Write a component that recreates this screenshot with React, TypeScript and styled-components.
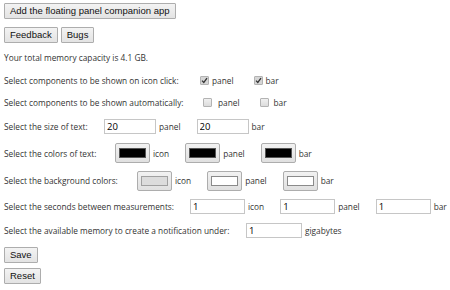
import React from 'react';
import styled, { createGlobalStyle } from 'styled-components';

const Global = createGlobalStyle`
  html, body { margin: 0; padding: 0; background: #ffffff; }
  body {
    font-family: "Open Sans", "Segoe UI", sans-serif;
    font-size: 8.3px;
    color: #333333;
  }
`;

const Page = styled.div`
  display: flex;
  flex-direction: column;
  align-items: flex-start;
  padding: 3px 4px 0;
  width: 450px;
  box-sizing: border-box;
`;

const Button = styled.button`
  height: 16px;
  padding: 0 5px;
  margin: 0;
  font-family: "Liberation Sans", Arial, sans-serif;
  font-size: 9.5px;
  line-height: 14px;
  color: #111111;
  background: linear-gradient(#f3f3f3, #e3e3e3);
  border: 1px solid #adadad;
  border-radius: 1px;
`;

const ButtonBar = styled.div<{ $mt: number }>`
  display: flex;
  gap: 3px;
  margin-top: ${(p) => p.$mt}px;
`;

const Settings = styled.div`
  display: flex;
  flex-direction: column;
  margin-top: 3px;
  margin-bottom: 5px;
`;

const Row = styled.div<{ $h: number }>`
  display: flex;
  align-items: center;
  height: ${(p) => p.$h}px;
  white-space: nowrap;
`;

const Label = styled.span<{ $w?: number }>`
  flex: none;
  width: ${(p) => (p.$w ? `${p.$w}px` : 'auto')};
`;

const Caption = styled.span<{ $ml?: number; $mr?: number }>`
  margin: 0 ${(p) => p.$mr ?? 16}px 0 ${(p) => p.$ml ?? 3}px;
`;

const Check = styled.span<{ $on?: boolean }>`
  flex: none;
  width: 9px;
  height: 9px;
  box-sizing: border-box;
  border: 1px solid #b3b3b3;
  border-radius: 1px;
  background: ${(p) => (p.$on ? '#d6d6d6' : 'linear-gradient(#f0f0f0, #dcdcdc)')};
  display: inline-flex;
  align-items: center;
  justify-content: center;
`;

const TextField = styled.input<{ $w: number }>`
  flex: none;
  width: ${(p) => p.$w}px;
  height: 15px;
  box-sizing: border-box;
  margin: 0;
  padding: 0 2px;
  border: 1px solid #c6c6c6;
  font-family: "Open Sans", "Segoe UI", sans-serif;
  font-size: 9.5px;
  color: #000000;
  background: #ffffff;
  outline: none;
`;

const ColorWell = styled.span`
  flex: none;
  display: inline-flex;
  align-items: center;
  justify-content: center;
  width: 35px;
  height: 20px;
  box-sizing: border-box;
  border: 1px solid #adadad;
  border-radius: 2px;
  background: linear-gradient(#f2f2f2, #e0e0e0);
`;

const Swatch = styled.span<{ $c: string; $b: string }>`
  width: 27px;
  height: 10px;
  box-sizing: border-box;
  background: ${(p) => p.$c};
  border: 1px solid ${(p) => p.$b};
`;

const Tick = () => (
  <svg width="7" height="7" viewBox="0 0 7 7">
    <path d="M1 3.6 L2.8 5.4 L6 1.2" fill="none" stroke="#333" strokeWidth="1.3" />
  </svg>
);

const Box = ({ on }: { on?: boolean }) => <Check $on={on}>{on ? <Tick /> : null}</Check>;

const Color = ({ c, b }: { c: string; b: string }) => (
  <ColorWell>
    <Swatch $c={c} $b={b} />
  </ColorWell>
);

export default function App() {
  return (
    <>
      <Global />
      <Page>
        <Button>Add the floating panel companion app</Button>
        <ButtonBar $mt={8}>
          <Button>Feedback</Button>
          <Button>Bugs</Button>
        </ButtonBar>
        <Settings>
          <Row $h={23}>
            <Label>Your total memory capacity is 4.1 GB.</Label>
          </Row>
          <Row $h={22}>
            <Label $w={196}>Select components to be shown on icon click:</Label>
            <Box on />
            <Caption $mr={20}>panel</Caption>
            <Box on />
            <Caption>bar</Caption>
          </Row>
          <Row $h={22}>
            <Label $w={199}>Select components to be shown automatically:</Label>
            <Box />
            <Caption $ml={6} $mr={20}>panel</Caption>
            <Box />
            <Caption $ml={5}>bar</Caption>
          </Row>
          <Row $h={26}>
            <Label $w={100}>Select the size of text:</Label>
            <TextField $w={52} value="20" readOnly />
            <Caption>panel</Caption>
            <TextField $w={52} value="20" readOnly />
            <Caption>bar</Caption>
          </Row>
          <Row $h={28}>
            <Label $w={111}>Select the colors of text:</Label>
            <Color c="#000000" b="#555555" />
            <Caption>icon</Caption>
            <Color c="#000000" b="#555555" />
            <Caption>panel</Caption>
            <Color c="#000000" b="#555555" />
            <Caption>bar</Caption>
          </Row>
          <Row $h={27}>
            <Label $w={133}>Select the background colors:</Label>
            <Color c="#dcdcdc" b="#a0a0a0" />
            <Caption>icon</Caption>
            <Color c="#ffffff" b="#8a8a8a" />
            <Caption>panel</Caption>
            <Color c="#ffffff" b="#8a8a8a" />
            <Caption>bar</Caption>
          </Row>
          <Row $h={25}>
            <Label $w={186}>Select the seconds between measurements:</Label>
            <TextField $w={55} value="1" readOnly />
            <Caption>icon</Caption>
            <TextField $w={55} value="1" readOnly />
            <Caption>panel</Caption>
            <TextField $w={55} value="1" readOnly />
            <Caption>bar</Caption>
          </Row>
          <Row $h={23}>
            <Label $w={242}>Select the available memory to create a notification under:</Label>
            <TextField $w={56} value="1" readOnly />
            <Caption>gigabytes</Caption>
          </Row>
        </Settings>
        <Button>Save</Button>
        <ButtonBar $mt={5}>
          <Button>Reset</Button>
        </ButtonBar>
      </Page>
    </>
  );
}
